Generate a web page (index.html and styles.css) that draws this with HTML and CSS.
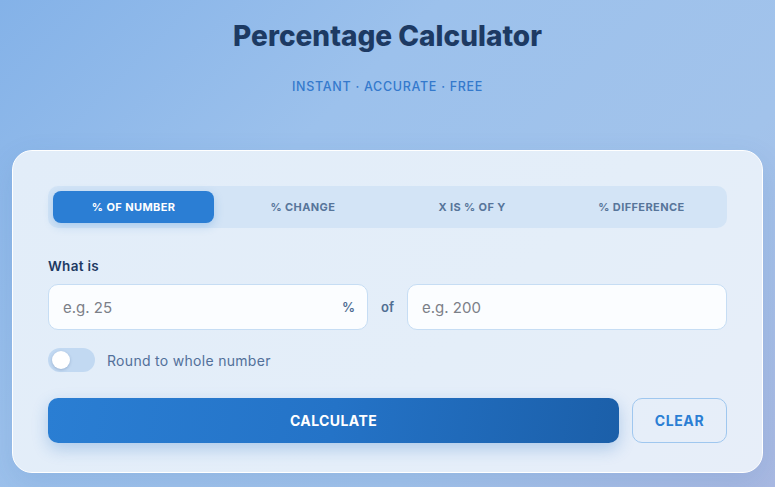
FILE: index.html
```html
<!DOCTYPE html>
<html lang="en">
<head>
<meta charset="utf-8">
<title>Percentage Calculator</title>
<link rel="stylesheet" href="styles.css">
</head>
<body>
<main class="page">
  <header class="hero">
    <h1 class="title">Percentage Calculator</h1>
    <p class="subtitle">INSTANT · ACCURATE · FREE</p>
  </header>
  <section class="card">
    <nav class="tabs">
      <button class="tab active">% OF NUMBER</button>
      <button class="tab">% CHANGE</button>
      <button class="tab">X IS % OF Y</button>
      <button class="tab">% DIFFERENCE</button>
    </nav>
    <div class="field-label">What is</div>
    <div class="inputs">
      <div class="input-wrap">
        <input class="input" type="text" placeholder="e.g. 25">
        <span class="suffix">%</span>
      </div>
      <span class="of">of</span>
      <div class="input-wrap">
        <input class="input" type="text" placeholder="e.g. 200">
      </div>
    </div>
    <label class="toggle-row">
      <span class="switch"><span class="knob"></span></span>
      <span class="toggle-text">Round to whole number</span>
    </label>
    <div class="actions">
      <button class="btn-calc">CALCULATE</button>
      <button class="btn-clear">CLEAR</button>
    </div>
  </section>
</main>
</body>
</html>
```
FILE: styles.css
```css
* { box-sizing: border-box; }
html, body { margin: 0; height: 100%; }
body {
  font-family: "Inter", "Liberation Sans", sans-serif;
  background: linear-gradient(135deg, #84b2e8 0%, #9cc1ec 35%, #a2c3eb 70%, #a9b9e2 100%);
  overflow: hidden;
}
.page { padding: 0 12px; }
.hero { text-align: center; }
.title {
  margin: 18px 0 0;
  font-size: 28px;
  line-height: 36px;
  font-weight: 800;
  color: #1d3a63;
  letter-spacing: 0;
}
.subtitle {
  margin: 24px 0 0;
  font-size: 12.5px;
  line-height: 18px;
  font-weight: 500;
  color: #3479cc;
  letter-spacing: 0.7px;
}
.card {
  margin-top: 54px;
  background: linear-gradient(135deg, #e2edf9 0%, #e4eef9 60%, #e7eef9 100%);
  border: 1px solid #ffffff;
  border-radius: 20px;
  padding: 35px 35px 29px;
  box-shadow: 0 10px 30px rgba(40, 90, 160, 0.12);
}
.tabs {
  display: grid;
  grid-template-columns: repeat(4, 1fr);
  gap: 8px;
  padding: 5px;
  background: #d3e4f6;
  border-radius: 10px;
}
.tab {
  height: 32px;
  border: 0;
  border-radius: 8px;
  background: transparent;
  font-family: inherit;
  font-size: 11px;
  font-weight: 700;
  letter-spacing: 0.4px;
  color: #57759a;
  cursor: pointer;
}
.tab.active {
  background: #2b7ed4;
  color: #ffffff;
  box-shadow: 0 3px 10px rgba(43, 126, 212, 0.25);
}
.field-label {
  margin-top: 29px;
  font-size: 13.5px;
  line-height: 18px;
  font-weight: 600;
  letter-spacing: 0.3px;
  color: #1d3a63;
}
.inputs {
  margin-top: 9px;
  display: grid;
  grid-template-columns: 1fr auto 1fr;
  align-items: center;
  gap: 13px;
}
.input-wrap {
  position: relative;
  display: flex;
  align-items: center;
  height: 46px;
  background: #fbfdff;
  border: 1px solid #c6ddf4;
  border-radius: 10px;
}
.input {
  flex: 1;
  min-width: 0;
  height: 100%;
  border: 0;
  background: transparent;
  padding: 0 14px;
  font-family: inherit;
  font-size: 15px;
  color: #1d3a63;
  outline: none;
}
.input::placeholder { color: #7b8088; }
.suffix {
  padding-right: 12px;
  font-size: 13px;
  font-weight: 600;
  color: #4f6d92;
}
.of {
  font-size: 13px;
  font-weight: 600;
  color: #4f6d92;
}
.toggle-row {
  margin-top: 18px;
  display: flex;
  align-items: center;
  gap: 12px;
}
.switch {
  width: 47px;
  height: 24px;
  border-radius: 12px;
  background: #c2d9f2;
  padding: 3px 4px;
  display: flex;
  align-items: center;
}
.knob {
  width: 18px;
  height: 18px;
  border-radius: 50%;
  background: #ffffff;
  box-shadow: 0 1px 3px rgba(30, 60, 110, 0.25);
}
.toggle-text {
  font-size: 14px;
  letter-spacing: 0.3px;
  color: #52709a;
}
.actions {
  margin-top: 26px;
  display: flex;
  gap: 13px;
}
.btn-calc {
  flex: 1;
  height: 45px;
  border: 0;
  border-radius: 10px;
  background: linear-gradient(100deg, #2a7ed3 0%, #2473c7 50%, #1b5fa9 100%);
  color: #ffffff;
  font-family: inherit;
  font-size: 14px;
  font-weight: 700;
  letter-spacing: 0.4px;
  box-shadow: 0 6px 16px rgba(36, 110, 196, 0.28);
}
.btn-clear {
  width: 95px;
  height: 45px;
  border: 1px solid #9fc7ef;
  border-radius: 10px;
  background: transparent;
  color: #2b7ed4;
  font-family: inherit;
  font-size: 14px;
  font-weight: 700;
  letter-spacing: 0.6px;
}
```
